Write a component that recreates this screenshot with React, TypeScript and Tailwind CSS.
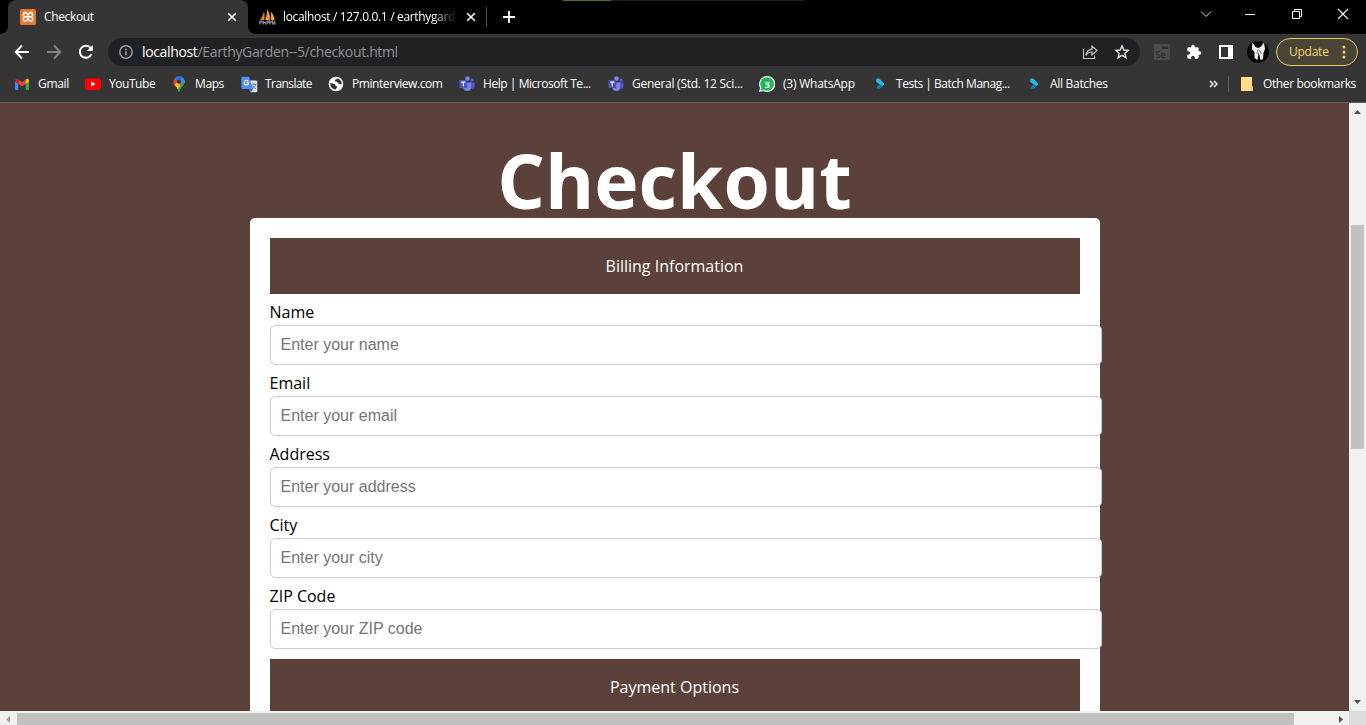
import type { ReactNode } from "react";

const uiFont = "font-['Open_Sans','Noto_Sans',sans-serif]";

function Xampp() {
  return (
    <svg width="16" height="16" viewBox="0 0 16 16" className="shrink-0">
      <rect width="16" height="16" rx="1.5" fill="#e8772e" />
      <path d="M3.4 3.6H6L8 6L10 3.6H12.6M5.200 3.800C3 3.900 2.600 6.800 4.900 7.700C2.500 8.600 2.900 12.200 5.400 12.200C7 12.200 7.400 10.600 8 9.400C8.600 10.600 9 12.200 10.600 12.200C13.100 12.200 13.500 8.600 11.100 7.700C13.400 6.800 13 3.900 10.800 3.800M5.600 7.700H10.400" fill="none" stroke="#fff" strokeWidth="1.500" />
    </svg>
  );
}

function PhpMyAdmin() {
  return (
    <svg width="17" height="16" viewBox="0 0 17 16" className="shrink-0">
      <path d="M1 11C2.8 9 4.2 6 4.8 2.5C5.8 5 5.8 8.500 5.200 11Z" fill="#d88a2a" />
      <path d="M6 11C7.500 8 8.200 4 8 .3C10.500 3.500 11.400 8 10.800 11Z" fill="#f59a23" />
      <path d="M11.800 11C12.400 7.500 12.200 5 11.600 2.500C14 4.500 15.500 8 15.600 11Z" fill="#f7a73a" />
      <path d="M.8 15.500V12H3V13.800H.8M4.500 11.800V15.500M4.500 13.500H6.500V15.500M8 15.500V12H10V13.800H8M11 15.500V12L12.300 13.500L13.600 12V15.500M14.700 15.500L15.400 12L16.300 15.500" fill="none" stroke="#8b8d9e" strokeWidth="1.100" />
    </svg>
  );
}

function CloseX() {
  return (
    <svg width="10" height="10" viewBox="0 0 10 10" className="shrink-0">
      <path d="M1.200 1.200L8.800 8.800M8.800 1.200L1.200 8.800" stroke="#fff" strokeWidth="1.600" />
    </svg>
  );
}

function Gmail() {
  return (
    <svg width="16" height="16" viewBox="0 0 16 16">
      <path d="M1 4V13Q1 14 2 14H4.300V6.500Z" fill="#4285f4" />
      <path d="M11.700 6.500V14H14Q15 14 15 13V4Z" fill="#34a853" />
      <path d="M4.300 3.500V7.800L8 10.600L11.700 7.800V3.500L8 6.300Z" fill="#ea4335" />
      <path d="M1 4.200V5.400L4.300 7.900V3.500L3.500 2.900C2.400 2.200 1 3 1 4.200Z" fill="#c5221f" />
      <path d="M15 4.200V5.400L11.700 7.900V3.500L12.500 2.900C13.600 2.200 15 3 15 4.200Z" fill="#fbbc04" />
    </svg>
  );
}

function YouTube() {
  return (
    <svg width="16" height="16" viewBox="0 0 16 16">
      <rect y="2.200" width="16" height="11.800" rx="3" fill="#f00" />
      <path d="M6.300 5.600V10.500L10.600 8.050Z" fill="#fff" />
    </svg>
  );
}

function Maps() {
  return (
    <svg width="16" height="16" viewBox="0 0 16 16">
      <clipPath id="pin"><path d="M8 .3A5.500 5.500 0 0 1 13.500 5.800C13.500 9.600 9.200 11 8.500 15.300Q8 16.200 7.500 15.300C6.800 11 2.500 9.600 2.500 5.800A5.500 5.500 0 0 1 8 .3Z" /></clipPath>
      <g clipPath="url(#pin)">
        <rect width="16" height="16" fill="#34a853" />
        <path d="M0 12L2 8L11 -2H16V4L6 14Z" fill="#fbbc04" />
        <path d="M6 0L8 6L14 -1Z" fill="#1a73e8" />
        <path d="M8 5L15 -2V4L9 10Z" fill="#4285f4" />
        <path d="M9.500 9L16 2V16H6Z" fill="#34a853" />
        <path d="M0 0H6L8 4.500L3.500 9L0 7Z" fill="#ea4335" />
        <path d="M5.500 -1H11L12 2L8 5.500L4 2Z" fill="#1a73e8" />
      </g>
      <circle cx="8" cy="5.800" r="2" fill="#303030" />
    </svg>
  );
}

function Translate() {
  return (
    <svg width="17" height="17" viewBox="0 0 17 17" className="-mr-px">
      <path d="M6 4.500H15Q16.300 4.500 16.300 5.800V15Q16.300 16.300 15 16.300H9.500Z" fill="#dfe1e5" />
      <path d="M1.500 .8H8L12.300 13H1.500Q.3 13 .3 11.800V2Q.3 .8 1.500 .8Z" fill="#4e8df5" />
      <path d="M8.500 13H12.300L9.700 16.200Z" fill="#3367d6" />
      <path d="M7.300 5.400A2.300 2.300 0 1 0 7.700 7H5.700" fill="none" stroke="#fff" strokeWidth="1.100" />
      <path d="M10.800 8.300H15.500M13 7V8.300M14.700 8.300C14.200 10.500 13 11.600 11.900 12.400M11.800 9.300C12.500 11 13.500 12 15 12.700" fill="none" stroke="#607d8b" strokeWidth=".9" />
    </svg>
  );
}

function Globe() {
  return (
    <svg width="16" height="16" viewBox="0 0 16 16">
      <circle cx="8" cy="8" r="7.300" fill="#fff" />
      <path d="M2.200 6.600C4.500 8.500 7.200 7 7.200 8.800C7.200 10 9 9.800 9 11.200C9 12.300 7.600 12.500 7.600 13.500C4.600 13.500 2.200 11 2.200 8Z" fill="#353535" />
      <path d="M9.800 2.400C8.700 3.400 6.800 3 6.800 4.600C6.800 6.200 9.300 5.400 10.100 6.900C10.700 8.200 12.200 8 13.800 8.200C13.900 5.400 12.300 3.300 9.800 2.400Z" fill="#353535" />
    </svg>
  );
}

function Teams() {
  return (
    <svg width="16" height="16" viewBox="0 0 16 16">
      <circle cx="13" cy="4.200" r="1.700" fill="#5059c9" />
      <path d="M10 6.500H15.500V10.500A2.600 2.600 0 0 1 11 12Z" fill="#5059c9" />
      <circle cx="8.500" cy="2.600" r="2.300" fill="#7b83eb" />
      <path d="M4.500 6.500H12.200V11.500A4 4 0 0 1 4.500 12.500Z" fill="#7b83eb" />
      <rect x=".3" y="4" width="8" height="8" rx=".7" fill="#4b53bc" />
      <path d="M2.300 6.100H6.300M4.300 6V10.300" stroke="#fff" strokeWidth="1.100" />
    </svg>
  );
}

function WhatsApp() {
  return (
    <svg width="16" height="16" viewBox="0 0 16 16">
      <path d="M8.100 0A8 8 0 1 1 4.400 15L0 16L1.100 11.900A8 8 0 0 1 8.100 0Z" fill="#fff" />
      <path d="M8.100 1.200A6.800 6.800 0 1 1 4.600 13.800L1.700 14.400L2.400 11.700A6.800 6.800 0 0 1 8.100 1.200Z" fill="#1fb855" />
      <text x="8.200" y="11.600" textAnchor="middle" fill="#fff" fontSize="9.500" fontWeight="700" fontFamily="Open Sans, sans-serif">3</text>
    </svg>
  );
}

function Batch() {
  return (
    <svg width="16" height="16" viewBox="0 0 16 16">
      <path d="M4.200 3.200Q4.200 2.500 5 2.500H7.300L11.900 7.200Q12.500 8 11.900 8.800L10.300 10.300L4.200 5.800Z" fill="#24b9e8" />
      <path d="M7.500 8.200L10.300 10.300L7.800 12.800H5Q4.600 12.800 4.600 12.300V11Z" fill="#0f7fa8" />
    </svg>
  );
}

const bookmarks: { label: string; icon: ReactNode; width: string; text: string }[] = [
  { label: "Gmail", icon: <Gmail />, width: "w-[71px]", text: "tracking-[-0.3px]" },
  { label: "YouTube", icon: <YouTube />, width: "w-[86px]", text: "tracking-[-0.45px]" },
  { label: "Maps", icon: <Maps />, width: "w-[70px]", text: "tracking-[-0.4px]" },
  { label: "Translate", icon: <Translate />, width: "w-[87px]", text: "tracking-[-0.55px]" },
  { label: "Pminterview.com", icon: <Globe />, width: "w-[131px]", text: "tracking-[-0.43px]" },
  { label: "Help | Microsoft Te...", icon: <Teams />, width: "w-[149px]", text: "tracking-[-0.45px]" },
  { label: "General (Std. 12 Sci...", icon: <Teams />, width: "w-[151px]", text: "tracking-[-0.27px]" },
  { label: "(3) WhatsApp", icon: <WhatsApp />, width: "w-[113px]", text: "tracking-[-0.22px]" },
  { label: "Tests | Batch Manag...", icon: <Batch />, width: "w-[154px]", text: "tracking-[-0.48px]" },
  { label: "All Batches", icon: <Batch />, width: "w-[90px]", text: "tracking-[-0.3px]" },
];

function TabStrip() {
  return (
    <div className="relative flex h-[34px] bg-black text-[12px] text-white">
      <div className="absolute top-0 left-[563px] flex h-px w-[241px] bg-[#202020]">
        <div className="w-12 bg-[#4e7321]" />
      </div>
      <div className="relative ml-2 flex h-[34px] w-60 items-center rounded-t-lg bg-[#353535] pr-[11px] pl-3">
        <svg width="8" height="8" className="absolute bottom-0 -left-2"><path d="M8 0V8H0A8 8 0 0 0 8 0Z" fill="#353535" /></svg>
        <svg width="8" height="8" className="absolute -right-2 bottom-0"><path d="M0 0V8H8A8 8 0 0 1 0 0Z" fill="#353535" /></svg>
        <Xampp />
        <span className="ml-2 grow tracking-[-0.35px]">Checkout</span>
        <CloseX />
      </div>
      <div className="flex w-[238px] items-center pr-[10px] pl-[11px]">
        <PhpMyAdmin />
        <span className="ml-[7px] w-[174px] tracking-[-0.34px] whitespace-nowrap [mask-image:linear-gradient(to_right,black_86%,transparent)]">localhost / 127.0.0.1 / earthygard</span>
        <div className="ml-[9px]"><CloseX /></div>
      </div>
      <div className="mt-[7px] h-5 w-px bg-[#505050]" />
      <svg width="12" height="12" className="mt-[11px] ml-4"><path d="M6 0V12M0 6H12" stroke="#fff" strokeWidth="1.800" /></svg>
      <div className="ml-auto flex h-7 items-center pr-[17px]">
        <svg width="12" height="12" className="mr-[33px]"><path d="M1 3.500L6 8.500L11 3.500" fill="none" stroke="#ddd" /></svg>
        <svg width="11" height="12" className="mr-[35px]"><path d="M0 6.500H10" stroke="#fff" /></svg>
        <svg width="12" height="12" className="mr-[34px]"><path d="M1.500 3.500H8.500V10.500H1.500ZM3.500 3.500V1.500H10.500V8.500H8.500" fill="none" stroke="#fff" /></svg>
        <svg width="12" height="12"><path d="M1 1L11 11M11 1L1 11" stroke="#fff" strokeWidth="1.100" /></svg>
      </div>
    </div>
  );
}

function Toolbar() {
  return (
    <div className="flex h-9 items-center pr-2 pl-[14px]">
      <svg width="16" height="16" viewBox="0 0 16 16"><path d="M15 8H2M8 1.500L1.700 8L8 14.500" fill="none" stroke="#fff" strokeWidth="1.900" /></svg>
      <svg width="16" height="16" viewBox="0 0 16 16" className="ml-4"><path d="M1 8H14M8 1.500L14.300 8L8 14.500" fill="none" stroke="#838383" strokeWidth="1.900" /></svg>
      <svg width="16" height="16" viewBox="0 0 16 16" className="ml-4"><path d="M13.500 10A6 6 0 1 1 12.800 4.300" fill="none" stroke="#fff" strokeWidth="2" /><path d="M14.800 1V7H8.800Z" fill="#fff" /></svg>
      <div className="ml-[14px] flex h-7 w-[1032px] items-center rounded-full bg-[#202124] pr-[10px] pl-[11px]">
        <svg width="14" height="14" viewBox="0 0 14 14"><circle cx="7" cy="7" r="6.200" fill="none" stroke="#9aa0a6" strokeWidth="1.400" /><path d="M7 6.200V10.300M7 3.500V5" stroke="#9aa0a6" strokeWidth="1.500" /></svg>
        <span className="ml-[9px] grow pb-px text-[14px] tracking-[-0.35px] text-[#8f9194]"><span className="text-white">localhost</span>/EarthyGarden--5/checkout.html</span>
        <svg width="16" height="16" viewBox="0 0 16 16" className="mr-4"><path d="M1.500 5V14.500H12.500V11.500" fill="none" stroke="#c4c4c4" strokeWidth="1.100" /><path d="M4 11.500C4.500 7.500 7 5.500 10 5.200V2L15 6.600L10 11V8C7.500 8 5.600 9 4 11.500Z" fill="none" stroke="#c4c4c4" strokeWidth="1.200" /></svg>
        <svg width="16" height="16" viewBox="0 0 16 16"><path d="M8 1.900L9.800 6L14.200 6.400L10.900 9.300L11.900 13.700L8 11.400L4.100 13.700L5.100 9.300L1.800 6.400L6.200 6Z" fill="none" stroke="#dedede" strokeWidth="1.400" /></svg>
      </div>
      <svg width="16" height="16" viewBox="0 0 16 16" className="ml-[14px]"><rect width="16" height="16" fill="#4b4b4b" /><path d="M8 2.500H14V5H8Z" fill="#303030" /><text x="1.500" y="13.700" fontSize="9" fontFamily="Open Sans, sans-serif" fill="#242424">Se</text></svg>
      <svg width="16" height="16" viewBox="0 0 24 24" className="ml-4"><path d="M20.500 11H19V7c0-1.100-.9-2-2-2h-4V3.500a2.500 2.500 0 0 0-5 0V5H4c-1.100 0-2 .9-2 2v3.800h1.500a2.700 2.700 0 0 1 0 5.400H2V20c0 1.100.9 2 2 2h3.800v-1.500a2.700 2.700 0 0 1 5.400 0V22H17c1.100 0 2-.9 2-2v-4h1.500a2.500 2.500 0 0 0 0-5Z" fill="#fff" /></svg>
      <svg width="14" height="14" className="ml-[17px]"><path d="M0 0H14V14H0ZM2 2V12H9V2Z" fill="#fff" fillRule="evenodd" /></svg>
      <svg width="22" height="22" viewBox="0 0 22 22" className="ml-[14px]"><circle cx="11" cy="11" r="11" fill="#050505" /><path d="M5.500 1.500L8.500 6L11 7L13.500 6L17 1.500L18 8L16.500 12L16 18L13.500 19L11.700 11L10.500 19L7.500 17L7.500 11L4.800 8Z" fill="#eee" /><path d="M11.200 8L9.800 13M12.500 9L14.500 13" stroke="#555" strokeWidth=".7" /></svg>
      <div className="ml-[7px] flex h-7 w-[82px] items-center rounded-full border border-[#e8c95f] bg-[#4a4536] pr-[11px] pl-3 text-[12px] text-[#f6d56c]">
        <span className="grow tracking-[-0.25px]">Update</span>
        <svg width="4" height="14"><circle cx="2" cy="2" r="1.500" fill="#f6d56c" /><circle cx="2" cy="7" r="1.500" fill="#f6d56c" /><circle cx="2" cy="12" r="1.500" fill="#f6d56c" /></svg>
      </div>
    </div>
  );
}

function BookmarksBar() {
  return (
    <div className="flex h-[33px] items-center border-b border-[#60605f] pb-1 pl-[14px] text-[12px] whitespace-nowrap text-white">
      {bookmarks.map((b) => (
        <div key={b.label} className={`flex shrink-0 items-center gap-2 ${b.width}`}>
          <span className="flex w-4 shrink-0">{b.icon}</span>
          <span className={b.text}>{b.label}</span>
        </div>
      ))}
      <svg width="9" height="8" className="ml-auto"><path d="M1 1L4 4L1 7M5 1L8 4L5 7" fill="none" stroke="#fff" strokeWidth="1.400" /></svg>
      <div className="ml-[10px] h-4 w-px bg-[#5c5c5c]" />
      <svg width="12" height="14" className="ml-3"><path d="M0 0H11V9.500H12V14H0Z" fill="#ffe08a" /><path d="M10 9.500H12V14H10Z" fill="#e8c15a" /></svg>
      <span className="ml-[10px] w-[103px] tracking-[-0.37px]">Other bookmarks</span>
    </div>
  );
}

function SectionTitle({ children }: { children: ReactNode }) {
  return <h2 className="flex h-14 items-center justify-center bg-[#5b4139] text-[16px] text-white">{children}</h2>;
}

const fields = [
  ["Name", "Enter your name"],
  ["Email", "Enter your email"],
  ["Address", "Enter your address"],
  ["City", "Enter your city"],
  ["ZIP Code", "Enter your ZIP code"],
];

function CheckoutPage() {
  return (
    <main className="h-[608px] w-[1349px] overflow-hidden bg-[#5b4139] font-['Open_Sans',sans-serif]">
      <h1 className="flex h-[115px] items-end justify-center text-[75px] leading-[76px] font-bold text-white">Checkout</h1>
      <form className="mx-auto h-[560px] w-[850px] rounded-[5px] bg-white p-5">
        <SectionTitle>Billing Information</SectionTitle>
        <div className="mb-[10px]">
          {fields.map(([label, hint]) => (
            <label key={label} className="block">
              <span className="block h-[31px] pt-[7px] text-[16px] leading-[22px] text-black">{label}</span>
              <input type="text" placeholder={hint} className="block h-10 w-[832px] rounded-[5px] border border-[#ccc] bg-white px-[10px] font-['Liberation_Sans',sans-serif] text-[16px] text-black placeholder:text-[#757575]" />
            </label>
          ))}
        </div>
        <SectionTitle>Payment Options</SectionTitle>
      </form>
    </main>
  );
}

export default function App() {
  return (
    <div className="flex h-[725px] w-[1366px] flex-col overflow-hidden bg-[#f1f1f1]">
      <header className={`h-[103px] shrink-0 bg-[#353535] ${uiFont}`}>
        <TabStrip />
        <Toolbar />
        <BookmarksBar />
      </header>
      <div className="flex h-[608px] shrink-0">
        <CheckoutPage />
        <div className="flex w-[17px] flex-col items-center bg-[#f1f1f1]">
          <svg width="7" height="4" className="mt-[7px]"><path d="M0 4L3.500 0L7 4Z" fill="#505050" /></svg>
          <div className="mt-[111px] h-56 w-[13px] bg-[#c1c1c1]" />
          <svg width="7" height="4" className="mt-auto mb-[7px]"><path d="M0 0H7L3.500 4Z" fill="#505050" /></svg>
        </div>
      </div>
      <div className="flex h-[14px] shrink-0 bg-[#f1f1f1]">
        <svg width="4" height="7" className="mt-[5px] ml-[6px]"><path d="M4 0V7L0 3.500Z" fill="#a3a3a3" /></svg>
        <div className="mt-[2px] ml-[7px] h-3 w-[1277px] bg-[#c1c1c1]" />
        <svg width="4" height="7" className="mt-[5px] ml-[45px]"><path d="M0 0L4 3.500L0 7Z" fill="#505050" /></svg>
        <div className="ml-auto w-[17px] bg-[#dcdcdc]" />
      </div>
    </div>
  );
}
